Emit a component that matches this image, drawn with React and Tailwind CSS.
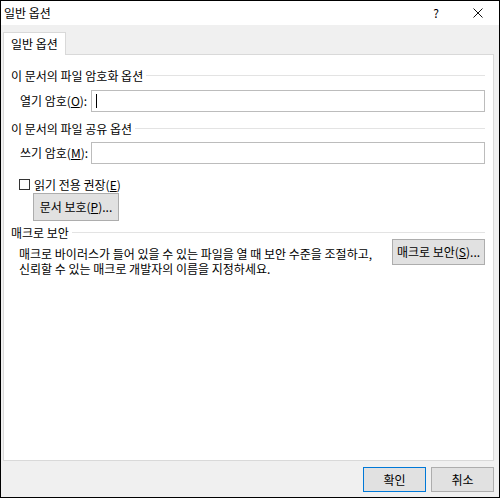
import React from "react";

const font = "font-['Noto_Sans_CJK_KR','Noto_Sans',sans-serif]";

const SectionHeading = ({ children, className = "" }) => (
  <div className={`flex items-center h-[15px] ${className}`}>
    <span className="whitespace-nowrap leading-none">{children}</span>
    <div className="flex-1 h-px bg-[#e3e3e3] ml-[3px]" />
  </div>
);

const Button = ({ children, className = "" }) => (
  <div
    className={`flex items-center justify-center bg-[#e1e1e1] border border-[#adadad] leading-none ${className}`}
  >
    {children}
  </div>
);

export default function App() {
  return (
    <div
      className={`w-[500px] h-[498px] border border-black bg-[#f0f0f0] flex flex-col text-[12px] text-black ${font}`}
    >
      {/* title bar */}
      <div className="h-[24px] bg-white flex items-center pl-[3px] pr-[16px]">
        <span className="leading-none">일반 옵션</span>
        <div className="flex-1" />
        <span className="leading-none mr-[34px]">?</span>
        <svg width="10" height="10" viewBox="0 0 10 10">
          <path d="M0.5 0.5L9.5 9.5M9.5 0.5L0.5 9.5" stroke="#111" strokeWidth="1" />
        </svg>
      </div>

      {/* body */}
      <div className="flex-1 flex flex-col pl-[2px] pr-[5px] pt-[7px]">
        {/* tab */}
        <div className="w-[63px] h-[23px] bg-white border border-b-0 border-[#d9d9d9] flex items-center pl-[7px] relative z-10 -mb-px">
          <span className="leading-none whitespace-nowrap">일반 옵션</span>
        </div>

        {/* panel */}
        <div className="h-[407px] bg-white border border-[#d9d9d9] pl-[7px] pr-[8px] flex flex-col">
          <SectionHeading className="mt-[13px]">이 문서의 파일 암호화 옵션</SectionHeading>
          <div className="flex items-center mt-[7px]">
            <span className="w-[80px] pl-[9px] leading-none whitespace-nowrap">
              열기 암호(<u>O</u>):
            </span>
            <div className="flex-1 h-[22px] border border-[#bcbcbc] bg-white flex items-center pl-[4px]">
              <div className="w-px h-[14px] bg-black" />
            </div>
          </div>

          <SectionHeading className="mt-[9px]">이 문서의 파일 공유 옵션</SectionHeading>
          <div className="flex items-center mt-[6px]">
            <span className="w-[80px] pl-[9px] leading-none whitespace-nowrap">
              쓰기 암호(<u>M</u>):
            </span>
            <div className="flex-1 h-[22px] border border-[#bcbcbc] bg-white" />
          </div>

          <div className="flex items-center mt-[15px] pl-[8px] h-[11px]">
            <div className="w-[11px] h-[11px] border border-[#333] bg-white" />
            <span className="ml-[4px] leading-none whitespace-nowrap">
              읽기 전용 권장(<u>E</u>)
            </span>
          </div>

          <Button className="mt-[3px] ml-[22px] w-[86px] h-[28px]">
            문서 보호(<u>P</u>)...
          </Button>

          <SectionHeading className="mt-[4px]">매크로 보안</SectionHeading>

          <div className="flex items-start mt-[-1px]">
            <div className="flex-1 pl-[8px] pt-[7px] leading-[15px]">
              <div className="whitespace-nowrap">
                매크로 바이러스가 들어 있을 수 있는 파일을 열 때 보안 수준을 조절하고,
              </div>
              <div className="whitespace-nowrap">
                신뢰할 수 있는 매크로 개발자의 이름을 지정하세요.
              </div>
            </div>
            <Button className="w-[93px] h-[26px]">
              매크로 보안(<u>S</u>)...
            </Button>
          </div>
        </div>

        {/* footer */}
        <div className="flex justify-end pt-[6px] gap-[5px]">
          <Button className="w-[63px] h-[25px] !border-[#0078d7]">확인</Button>
          <Button className="w-[63px] h-[25px]">취소</Button>
        </div>
      </div>
    </div>
  );
}
